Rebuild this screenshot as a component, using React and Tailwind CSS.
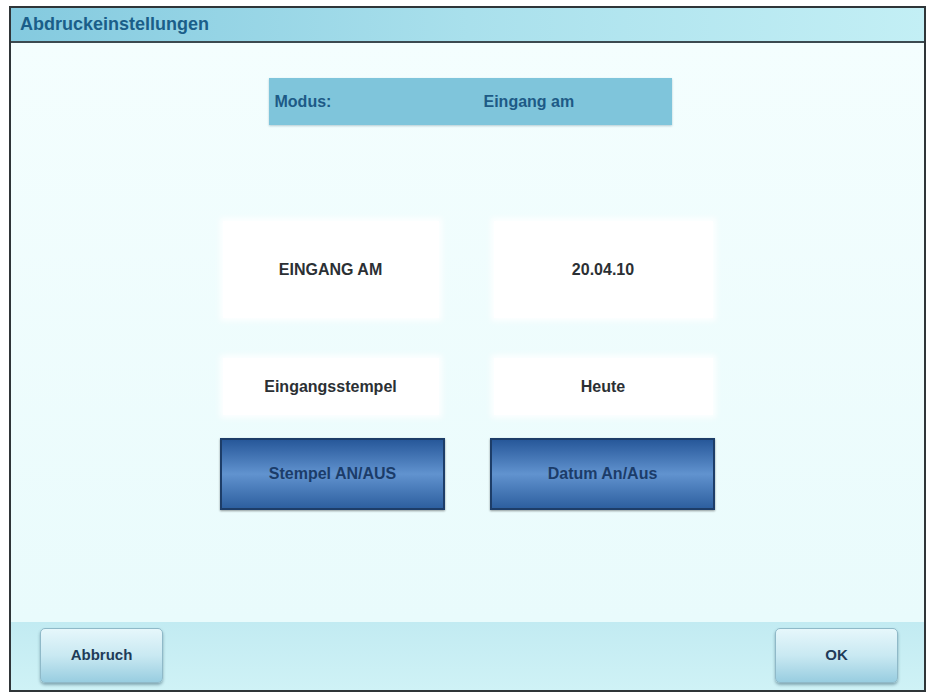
import React from 'react';

const font = { fontFamily: '"Liberation Sans", Arial, sans-serif' };

function InfoBox({ children, className = '' }) {
  return (
    <div
      className={`flex items-center justify-center bg-white text-[16px] font-bold text-[#2b3034] shadow-[0_0_6px_3px_rgba(255,255,255,0.9)] ${className}`}
    >
      {children}
    </div>
  );
}

function ToggleButton({ children }) {
  return (
    <button className="flex h-[72px] w-[225px] items-center justify-center border-2 border-[#1d3d68] bg-gradient-to-b from-[#27589a] via-[#6193cf] to-[#2d5f9f] text-[16px] font-bold text-[#1b3c69] shadow-[0_1px_2px_rgba(0,0,0,0.4)]">
      {children}
    </button>
  );
}

function FooterButton({ children }) {
  return (
    <button className="flex h-[55px] w-[123px] items-center justify-center rounded-[5px] border border-[#8fb9c8] bg-gradient-to-b from-[#e6f7fb] via-[#c9e9f2] to-[#98cde0] text-[15px] font-bold text-[#1f3b58] shadow-[0_2px_3px_rgba(40,80,100,0.45)]">
      {children}
    </button>
  );
}

export default function App() {
  return (
    <div className="h-[695px] w-[934px] bg-white pl-[9px] pt-[6px]" style={font}>
      <div className="flex h-[686px] w-[917px] flex-col border-2 border-[#2f3538]">
        {/* title bar */}
        <div className="flex h-[35px] items-center border-b-2 border-[#3c4a50] bg-gradient-to-r from-[#84cadf] via-[#a9e0ec] to-[#c3eff5] px-[9px]">
          <span className="text-[18px] font-bold text-[#1a5e89]">Abdruckeinstellungen</span>
        </div>

        {/* settings area */}
        <div className="flex flex-1 flex-col items-center bg-gradient-to-b from-[#f4fefe] to-[#e9fbfc]">
          <div className="mt-[35px] ml-[5px] flex h-[47px] w-[403px] items-center bg-[#7fc5db] px-[6px] text-[16px] font-bold text-[#1d5a86] shadow-[0_1px_2px_rgba(60,110,130,0.35)]">
            <span className="w-[209px]">Modus:</span>
            <span>Eingang am</span>
          </div>

          <div className="mt-[96px] flex gap-[55px]">
            <InfoBox className="h-[97px] w-[216px]">EINGANG AM</InfoBox>
            <InfoBox className="h-[97px] w-[219px]">20.04.10</InfoBox>
          </div>

          <div className="mt-[40px] flex gap-[55px]">
            <InfoBox className="h-[57px] w-[216px]">Eingangsstempel</InfoBox>
            <InfoBox className="h-[57px] w-[219px]">Heute</InfoBox>
          </div>

          <div className="mt-[23px] flex gap-[45px]">
            <ToggleButton>Stempel AN/AUS</ToggleButton>
            <ToggleButton>Datum An/Aus</ToggleButton>
          </div>
        </div>

        {/* footer */}
        <div className="flex h-[68px] items-start justify-between bg-gradient-to-b from-[#c2ebf2] to-[#cff2f6] pl-[29px] pr-[26px] pt-[6px]">
          <FooterButton>Abbruch</FooterButton>
          <FooterButton>OK</FooterButton>
        </div>
      </div>
    </div>
  );
}
